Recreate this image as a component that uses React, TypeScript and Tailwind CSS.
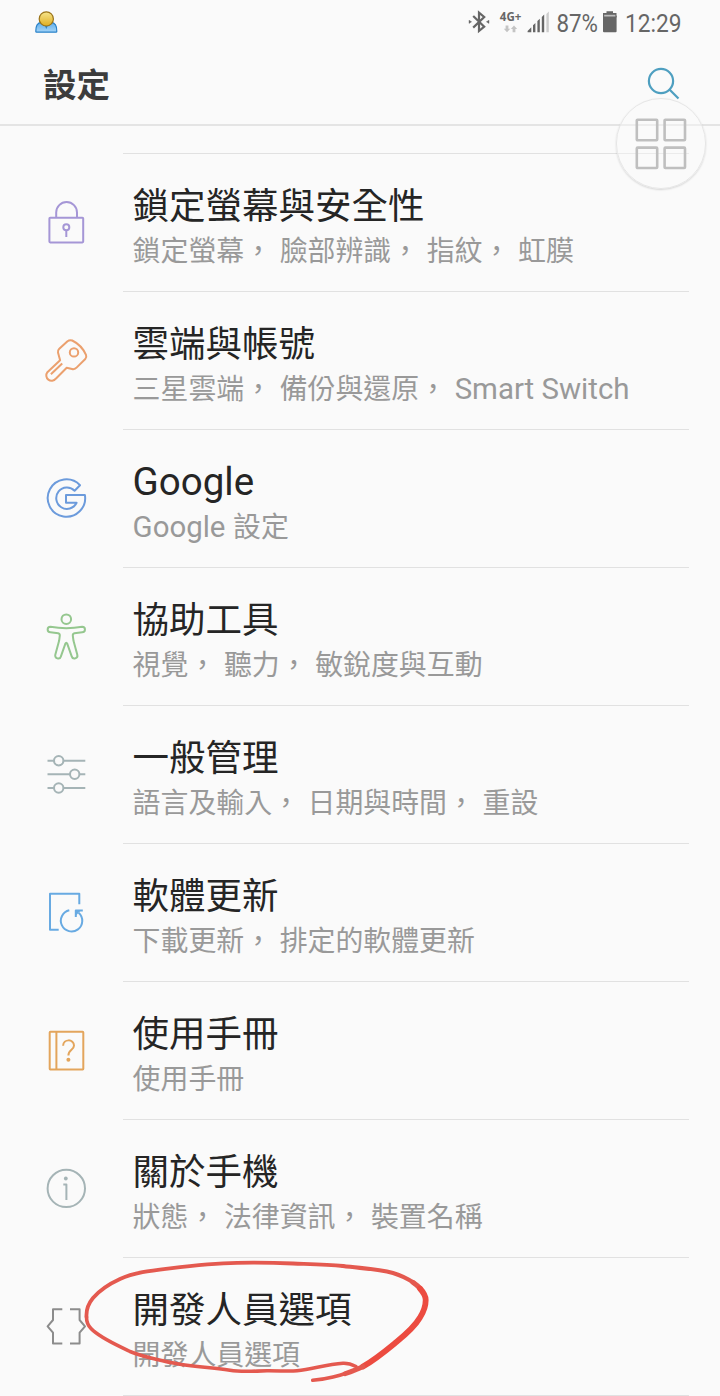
import type { ReactNode } from 'react';

interface SettingItem {
  title: string;
  summary: string;
  color: string;
  icon: ReactNode;
}

// Icons share a 60x60 viewBox and take their stroke from the row colour
const ITEMS: SettingItem[] = [
  {
    title: '鎖定螢幕與安全性',
    summary: '鎖定螢幕， 臉部辨識， 指紋， 虹膜',
    color: '#a596d6',
    icon: (
      <>
        <rect x="13.4" y="24.8" width="33.8" height="24.6" rx="0.8" />
        <path d="M20.2 24.8V19.5a10.4 10.4 0 0 1 20.8 0v5.3" />
        <circle cx="30.3" cy="34.3" r="3" />
        <path d="M30.3 37.3V44" />
      </>
    ),
  },
  {
    title: '雲端與帳號',
    summary: '三星雲端， 備份與還原， Smart Switch',
    color: '#eba06e',
    icon: (
      <>
        <path d="M31.5 10.2Q33.6 8.6 36.2 9.5Q45.5 14 50 23.8Q50.9 26 49.3 28L40.8 36.4Q38.8 38.7 36 38L30.7 36.8L19.8 47.7A4.9 4.9 0 0 1 11.4 41.2L24.1 29.2L22 21.6Q21.6 19.4 23.3 17.8Z" />
        <circle cx="38" cy="21.4" r="4.2" />
        <path d="M26.2 32.6L14.9 43.3" />
      </>
    ),
  },
  {
    title: 'Google',
    summary: 'Google 設定',
    color: '#6c9bdc',
    icon: (
      <path d="M43.7 15.8A18.7 18.7 0 1 0 48.6 25.7H29.7V33.4H40.3A10.7 10.7 0 1 1 38.3 21.3Z" transform="translate(.3 .4)" />
    ),
  },
  {
    title: '協助工具',
    summary: '視覺， 聽力， 敏銳度與互動',
    color: '#95c78f',
    icon: (
      <>
        <circle cx="30.3" cy="12.2" r="4.8" />
        <path d="M14.4 19.8Q30.3 22.6 46.2 19.8A2.75 2.75 0 0 1 46.2 25.3L38.4 26.2Q36.6 26.6 36.8 28.6L37.5 33.8L41.3 47.8A2.9 2.9 0 0 1 35.7 49.4L31.3 36.8Q30.3 34.8 29.3 36.8L24.9 49.4A2.9 2.9 0 0 1 19.3 47.8L23.1 33.8L23.8 28.6Q24 26.6 22.2 26.2L14.4 25.3A2.75 2.75 0 0 1 14.4 19.8Z" />
      </>
    ),
  },
  {
    title: '一般管理',
    summary: '語言及輸入， 日期與時間， 重設',
    color: '#a5b4b6',
    icon: (
      <>
        <path d="M11.5 15.7H18M27.4 15.7H49.3M11.5 29.3H34M43.4 29.3H49.3M11.5 43H18M27.4 43H49.3" />
        <circle cx="22.7" cy="15.7" r="4.7" />
        <circle cx="38.7" cy="29.3" r="4.7" />
        <circle cx="22.7" cy="43" r="4.7" />
      </>
    ),
  },
  {
    title: '軟體更新',
    summary: '下載更新， 排定的軟體更新',
    color: '#68aae2',
    icon: (
      <>
        <path d="M43.3 21.3V10.8H14V46.7H22.7" />
        <path d="M33.3 27.3A10.7 10.7 0 1 0 42.6 29.7" />
        <path d="M46.8 27.6H39.8V34" />
        <path d="M40 27.8H44.5L40 32.5Z" fill="currentColor" stroke="none" />
      </>
    ),
  },
  {
    title: '使用手冊',
    summary: '使用手冊',
    color: '#e3a55c',
    icon: (
      <>
        <rect x="13.7" y="10.8" width="33.6" height="37.6" rx="0.6" />
        <path d="M20.4 10.8V48.4" />
        <path d="M27.1 24.8C27.2 17.6 38 17.6 38 24.6C38 29.2 32.4 28.6 32.4 34.6" />
        <circle cx="32.4" cy="38.7" r="2" fill="currentColor" stroke="none" />
      </>
    ),
  },
  {
    title: '關於手機',
    summary: '狀態， 法律資訊， 裝置名稱',
    color: '#a5b4b6',
    icon: (
      <>
        <circle cx="30.3" cy="29.4" r="18.7" />
        <circle cx="29.8" cy="19.5" r="1.9" fill="currentColor" stroke="none" />
        <path d="M27.3 25.6H30.4V41" />
      </>
    ),
  },
  {
    title: '開發人員選項',
    summary: '開發人員選項',
    color: '#8c8c8c',
    icon: (
      <path d="M26.3 12.3H17V23L11.6 29.3L17 35.7V46.6H26.3M34 12.3H43.6V23L49 29.3L43.6 35.7V46.6H34" />
    ),
  },
];

// Latin runs are set slightly larger than the Chinese text around them
function MixedText({ text }: { text: string }) {
  const parts = text.split(/([A-Za-z]+(?: [A-Za-z]+)*)/).filter(Boolean);
  return (
    <>
      {parts.map((part, i) => (
        <span key={i} className={/^[A-Za-z]/.test(part) ? 'text-[1.055em] leading-none' : '[word-spacing:0.7px]'}>{part}</span>
      ))}
    </>
  );
}

function SettingRow({ item }: { item: SettingItem }) {
  return (
    <li className="flex h-[138px]">
      <div className="w-[123px] pl-9 pt-[39px]" style={{ color: item.color }}>
        <svg width="60" height="60" viewBox="0 0 60 60" fill="none" stroke="currentColor" strokeWidth="2" strokeLinejoin="round">
          {item.icon}
        </svg>
      </div>
      <div className="mr-[31px] flex-1 border-b border-[#e1e1e1] pl-[9.6px] pt-[27.5px] whitespace-pre">
        <div className="h-[50px] text-[36.5px] leading-[50px] text-[#252525]"><MixedText text={item.title} /></div>
        <div className="h-10 text-[27.9px] leading-10 text-[#999999]"><MixedText text={item.summary} /></div>
      </div>
    </li>
  );
}

function StatusBar() {
  return (
    <div className="flex h-[46px] items-center justify-between pl-[34px] pr-[27px] text-[#666666]">
      <svg width="25" height="25" viewBox="0 0 25 25">
        <defs>
          <linearGradient id="head" x1="0" y1="0" x2="0" y2="1">
            <stop offset="0" stopColor="#f6e58c" />
            <stop offset="1" stopColor="#dfae22" />
          </linearGradient>
          <linearGradient id="torso" x1="0" y1="0" x2="0" y2="1">
            <stop offset="0" stopColor="#5fadea" />
            <stop offset="1" stopColor="#a5d5f8" />
          </linearGradient>
        </defs>
        <path d="M1.8 20.4C1.600 15 3.200 11.700 7.500 11.300H17C21.400 11.700 23 15 22.800 20.4Q22.8 21.200 22 21.200H2.6Q1.8 21.200 1.8 20.4Z" fill="url(#torso)" stroke="#2a82c9" strokeWidth="1.2" />
        <path d="M11 15L12.3 18L13.6 15" fill="#2a82c9" />
        <circle cx="12.3" cy="7.9" r="7.1" fill="url(#head)" stroke="#9b7418" strokeWidth="1.2" />
      </svg>
      <div className="flex items-center">
        <svg width="87" height="30" viewBox="0 0 87 30" fill="none" stroke="currentColor" strokeWidth="2.2">
          <path d="M5.2 8L16.2 18.6L11 23V4.6L16.2 9L5.2 19.6" />
          <path d="M1 12.2L3.6 13.8L1 15.4ZM21 12.2L18.4 13.8L21 15.4Z" fill="currentColor" strokeWidth="0.4" />
          <text x="31.8" y="13.4" fontSize="12" fontWeight="700" fontFamily="'Open Sans', sans-serif" fill="currentColor" stroke="none" textLength="21.5" lengthAdjust="spacingAndGlyphs">4G+</text>
          <path d="M36.6 17.2H39.4V20.5H41.2L38 24L34.8 20.5H36.6ZM43.6 24H46.4V20.7H48.2L45 17.2L41.8 20.7H43.6Z" fill="#c4c4c4" stroke="none" transform="translate(1 .3)" />
          <path d="M59.6 24V22.6L63.3 19V24ZM65 24V17L67.4 14.6V24ZM69.400 24V12.8L71.8 10.4V24ZM73.800 24V8.6L76.2 6.2V24Z" transform="translate(0 .3)" fill="currentColor" stroke="none" />
          <path d="M78.4 24V5.6L80.8 3.2V24Z" fill="#cccccc" stroke="none" transform="translate(0 .3)" />
        </svg>
        <svg width="138" height="30" viewBox="0 0 138 30" fill="currentColor" fontFamily="Roboto, sans-serif" fontSize="26.5">
          <text x="1.5" y="24.3" textLength="41.5" lengthAdjust="spacingAndGlyphs">87%</text>
          <path d="M51.5 3.2H58V5H61.5V9.5H48V5H51.5Z" />
          <rect x="48" y="7.2" width="13.6" height="17" rx="1" />
          <rect x="49.2" y="6.8" width="11.2" height="1.7" fill="#bdbdbd" />
          <text x="70" y="24.3" textLength="56.5" lengthAdjust="spacingAndGlyphs">12:29</text>
        </svg>
      </div>
    </div>
  );
}

function FloatingButton() {
  return (
    <button className="absolute left-[616px] top-[98px] flex h-[91px] w-[90px] items-center justify-center rounded-full border border-[#e6e6e6] bg-[#fafafa]/40 shadow-[0_1px_2px_rgba(0,0,0,0.14)]">
      <svg width="52" height="52" viewBox="0 0 52 52" fill="none" stroke="#bfbfbf" strokeWidth="2.6">
        <rect x="1.8" y="1.8" width="20.4" height="20.4" rx="0.8" />
        <rect x="29.6" y="1.8" width="20.4" height="20.4" rx="0.8" />
        <rect x="1.8" y="29.6" width="20.4" height="20.4" rx="0.8" />
        <rect x="29.6" y="29.6" width="20.4" height="20.4" rx="0.8" />
      </svg>
    </button>
  );
}

// Red pen circle drawn by hand around the developer options row
function PenMark() {
  return (
    <svg className="pointer-events-none absolute left-[80px] top-[1256px]" width="360" height="130" viewBox="80 1256 360 130" fill="none" stroke="#e4594f" strokeLinecap="round" strokeLinejoin="round">
      <path d="M86.5 1317C86 1309 88 1304 93 1298C99 1291 108 1284.5 120 1279C134 1272.5 152 1270.5 170 1268.3C193 1265.5 214 1263.2 237 1262.8C256 1262.5 274 1262.7 293 1263.5C311 1264.1 327 1264.2 343 1266" strokeWidth="3.8" />
      <path d="M343 1266C361 1268.4 377 1268.5 393 1273C402 1275.7 409 1279.5 414 1283" strokeWidth="4.2" />
      <path d="M413 1282.3C416 1284.2 418.5 1286.5 420.5 1289" strokeWidth="5" />
      <path d="M420 1288.5C424 1293 425.7 1296.5 425.7 1300C425.7 1306 423.5 1312 420 1317.5C415 1326 405 1335 396.7 1341.7C386 1350.5 376 1359 363 1366.5" strokeWidth="5.8" stroke="#ec4b40" />
      <path d="M363 1366.5C357 1369.5 350 1372 345 1373.7" strokeWidth="4.8" />
      <path d="M346 1373.3C341 1375 338 1375.8 333 1377C325 1379 320 1379.7 312.7 1380.3" strokeWidth="3.6" />
      <path d="M86.5 1317C86.5 1322 87.5 1325 91 1328.5C100 1338 116 1344.5 130 1351.5C146 1358 163 1361 180 1364.3C199 1367.5 212 1367 230 1370.3C242 1372.3 254 1371 267 1370.8C280 1370.7 290 1371.5 297 1370.7C314 1368.5 327 1364.5 343 1363.3C349 1363 352 1364.5 356 1366.5" strokeWidth="3.6" />
    </svg>
  );
}

export default function App() {
  return (
    <div className="relative h-[1396px] w-[720px] overflow-hidden bg-[#fafafa] font-[Roboto,'Noto_Sans_CJK_TC',sans-serif]" lang="zh-Hant">
      <StatusBar />
      <header className="flex h-20 items-center justify-between border-b-2 border-[#e4e4e4] pl-[43px] pr-10">
        <h1 className="pt-[3px] text-[33.5px] font-bold text-[#3c3c3c]">設定</h1>
        <svg className="mb-[5px]" width="34" height="34" viewBox="0 0 34 34" fill="none" stroke="#4e9fc0" strokeWidth="2.2">
          <circle cx="15" cy="15" r="12.1" />
          <path d="M23.5 23.5L32.5 32.5" />
        </svg>
      </header>
      <div className="ml-[123px] mr-[31px] h-7 border-b border-[#e1e1e1]" />
      <ul>
        {ITEMS.map(item => <SettingRow key={item.title} item={item} />)}
      </ul>
      <FloatingButton />
      <PenMark />
    </div>
  );
}
